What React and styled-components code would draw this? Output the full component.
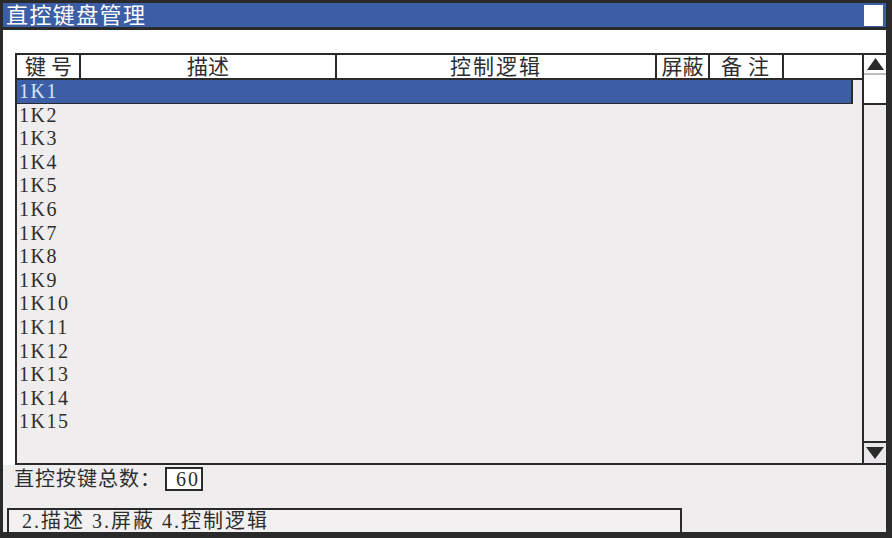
import React from "react";
import styled, { createGlobalStyle } from "styled-components";

const DARK = "#2b2a2b";
const BLUE = "#3b5ea6";
const GRAY = "#efedee";
const FONT = `"Liberation Serif", "Noto Sans CJK SC", serif`;

const GlobalStyle = createGlobalStyle`
  html, body { margin: 0; padding: 0; background: ${DARK}; }
  body { font-family: ${FONT}; color: #2e2d2e; }
  * { box-sizing: border-box; }
`;

const Window = styled.div`
  width: 892px;
  height: 538px;
  border-style: solid;
  border-color: ${DARK};
  border-width: 3px 6px 6px 3px;
  background: ${GRAY};
  display: flex;
  flex-direction: column;
  overflow: hidden;
`;

const TitleBar = styled.div`
  flex: none;
  height: 27px;
  background: ${BLUE};
  border-bottom: 3px solid ${DARK};
  display: flex;
  align-items: center;
  justify-content: space-between;
  padding: 0 3px;
`;

const Title = styled.div`
  color: #ffffff;
  font-size: 22px;
  letter-spacing: 1.4px;
  line-height: 24px;
  padding-top: 2px;
`;

const CloseBox = styled.div`
  width: 19px;
  height: 21px;
  background: #ffffff;
`;

const Panel = styled.div`
  flex: none;
  height: 435px;
  background: #ffffff;
  padding: 23px 0 0 12px;
  display: flex;
`;

const Table = styled.div`
  flex: 1;
  display: grid;
  grid-template-columns: 845px 24px;
  border-top: 2px solid ${DARK};
  border-left: 2px solid ${DARK};
  border-bottom: 2px solid ${DARK};
`;

const ListColumn = styled.div`
  display: flex;
  flex-direction: column;
  min-height: 0;
`;

const HeaderRow = styled.div`
  flex: none;
  height: 25px;
  display: flex;
  background: #ffffff;
  border-bottom: 2px solid ${DARK};
`;

const HeaderCell = styled.div`
  width: ${(p) => p.$w}px;
  border-right: ${(p) => (p.$last ? "none" : `2px solid ${DARK}`)};
  text-align: center;
  font-size: 21px;
  line-height: 24px;
  letter-spacing: ${(p) => p.$ls || 0}px;
  padding-left: ${(p) => p.$indent || 0}px;
  white-space: nowrap;
`;

const List = styled.div`
  flex: 1;
  background: ${GRAY};
  overflow: hidden;
`;

const Row = styled.div`
  height: 23.6px;
  width: ${(p) => (p.$selected ? "836px" : "auto")};
  background: ${(p) => (p.$selected ? BLUE : "transparent")};
  color: ${(p) => (p.$selected ? "#d6e3f5" : "#2e2d2e")};
  border-right: ${(p) => (p.$selected ? `2px solid ${DARK}` : "none")};
  border-bottom: ${(p) => (p.$selected ? `1px solid ${DARK}` : "none")};
  padding-left: 2px;
  font-size: 20px;
  line-height: 23px;
  letter-spacing: 1.5px;
`;

const Scrollbar = styled.div`
  border-left: 2px solid ${DARK};
  display: flex;
  flex-direction: column;
  background: ${GRAY};
`;

const ArrowButton = styled.div`
  flex: none;
  height: ${(p) => p.$h}px;
  background: ${(p) => p.$bg};
  display: flex;
  align-items: center;
  justify-content: center;
  border-top: ${(p) => (p.$topLine ? `2px solid ${DARK}` : "none")};
  border-bottom: ${(p) => (p.$bottomLine ? "2px solid #bdbbbd" : "none")};
`;

const Thumb = styled.div`
  flex: none;
  height: 30px;
  background: #ffffff;
  border-bottom: 2px solid ${DARK};
`;

const Track = styled.div`
  flex: 1;
`;

const Footer = styled.div`
  flex: 1;
  display: flex;
  flex-direction: column;
  background: ${GRAY};
`;

const CountRow = styled.div`
  flex: none;
  height: 43px;
  padding: 2px 0 0 11px;
  display: flex;
  align-items: flex-start;
`;

const CountLabel = styled.div`
  height: 24px;
  line-height: 24px;
  font-size: 20px;
  letter-spacing: 1px;
  margin-right: 4px;
  width: 147px;
  white-space: nowrap;
`;

const CountBox = styled.div`
  width: 38px;
  height: 24px;
  border: 2px solid ${DARK};
  background: #ffffff;
  padding-left: 9px;
  font-size: 20px;
  line-height: 20px;
  letter-spacing: 2px;
`;

const StatusBar = styled.div`
  margin-left: 4px;
  width: 675px;
  height: 24px;
  border: 2px solid ${DARK};
  border-bottom: none;
  background: #f2f0f1;
  padding-left: 13px;
  font-size: 20px;
  line-height: 22px;
  letter-spacing: 2px;
  white-space: nowrap;
`;

const UpTriangle = () => (
  <svg width="17" height="12" viewBox="0 0 17 12">
    <polygon points="8.5,0 17,12 0,12" fill={DARK} />
  </svg>
);

const DownTriangle = () => (
  <svg width="18" height="12" viewBox="0 0 18 12">
    <polygon points="0,0 18,0 9,12" fill={DARK} />
  </svg>
);

const columns = [
  { label: "键号", w: 64, ls: 5, indent: 6 },
  { label: "描述", w: 256 },
  { label: "控制逻辑", w: 320, ls: 2 },
  { label: "屏蔽", w: 53 },
  { label: "备注", w: 74, ls: 6, indent: 4 },
  { label: "", w: 78, last: true },
];

const rows = Array.from({ length: 15 }, (_, i) => `1K${i + 1}`);

export default function App() {
  return (
    <>
      <GlobalStyle />
      <Window>
        <TitleBar>
          <Title>直控键盘管理</Title>
          <CloseBox />
        </TitleBar>
        <Panel>
          <Table>
            <ListColumn>
              <HeaderRow>
                {columns.map((c, i) => (
                  <HeaderCell
                    key={i}
                    $w={c.w}
                    $ls={c.ls}
                    $indent={c.indent}
                    $last={c.last}
                  >
                    {c.label}
                  </HeaderCell>
                ))}
              </HeaderRow>
              <List>
                {rows.map((r, i) => (
                  <Row key={r} $selected={i === 0}>
                    {r}
                  </Row>
                ))}
              </List>
            </ListColumn>
            <Scrollbar>
              <ArrowButton $h={20} $bg="#ffffff" $bottomLine>
                <UpTriangle />
              </ArrowButton>
              <Thumb />
              <Track />
              <ArrowButton $h={22} $bg="#e9e7e9" $topLine>
                <DownTriangle />
              </ArrowButton>
            </Scrollbar>
          </Table>
        </Panel>
        <Footer>
          <CountRow>
            <CountLabel>直控按键总数：</CountLabel>
            <CountBox>60</CountBox>
          </CountRow>
          <StatusBar>2.描述 3.屏蔽 4.控制逻辑</StatusBar>
        </Footer>
      </Window>
    </>
  );
}
